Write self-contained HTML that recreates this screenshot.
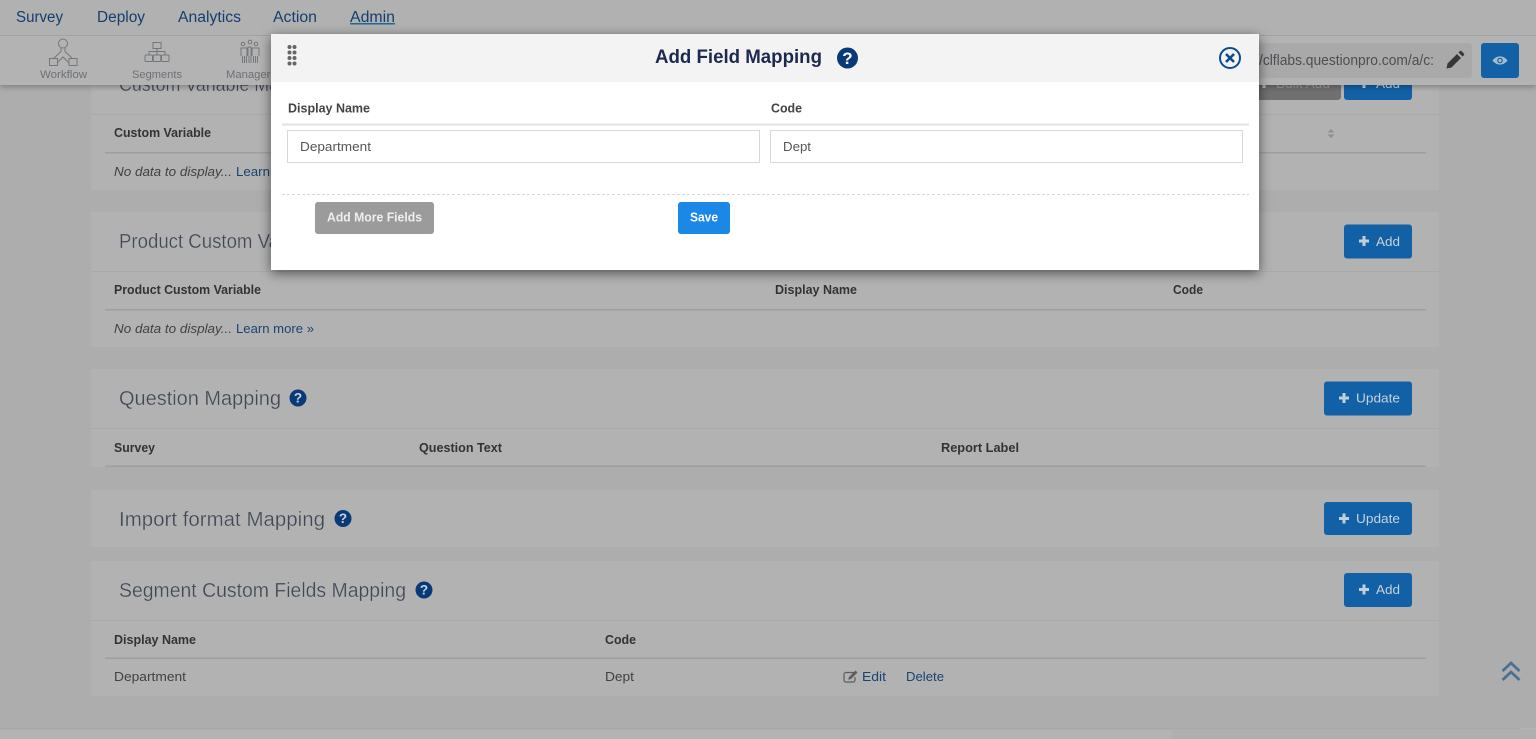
<!DOCTYPE html>
<html>
<head>
<meta charset="utf-8">
<title>Add Field Mapping</title>
<style>
html,body{margin:0;padding:0;width:1536px;height:739px;overflow:hidden;background:#adadad}
svg{display:block}
text{font-family:"Liberation Sans",sans-serif}
.nav{font-size:15.5px;fill:#123f6f}
.sub{font-size:11px;fill:#6c7076}
.h{font-size:20px;fill:#3f4856;stroke:#b2b2b2;stroke-width:.3px}
.th{font-size:12.5px;font-weight:bold;fill:#333}
.td{font-size:13px;fill:#414141}
.lnk{font-size:13px;fill:#1a4372}
.btn{font-size:13px;fill:#c6d2dd}
.mth{font-size:12.5px;font-weight:bold;fill:#444}
.inp{font-size:13px;fill:#555}
.q{font-size:13.5px;font-weight:bold;fill:#c9d3de}
</style>
</head>
<body>
<svg width="1536" height="739" viewBox="0 0 1536 739" xmlns="http://www.w3.org/2000/svg">
<defs>
<filter id="s1" x="-5%" y="-50%" width="110%" height="200%"><feDropShadow dx="0" dy="2" stdDeviation="3" flood-color="#000" flood-opacity=".28"/></filter>
<filter id="s2" x="-5%" y="-15%" width="110%" height="130%"><feDropShadow dx="0" dy="3" stdDeviation="6" flood-color="#000" flood-opacity=".55"/></filter>
<g id="help"><circle cx="0" cy="0" r="8.500" fill="#093a78"/><text x="0" y="4.700" text-anchor="middle" class="q">?</text></g>
<path id="plus" d="M-1.500-5h3v3.500h3.500v3h-3.500v3.500h-3v-3.500h-3.500v-3h3.500z" fill="#c2cfdb"/>
</defs>

<rect width="1536" height="739" fill="#adadad"/>

<!-- cards -->
<rect x="91" y="80" width="1348" height="110" fill="#b2b2b2"/>
<rect x="91" y="212" width="1348" height="135" fill="#b2b2b2"/>
<rect x="91" y="369" width="1348" height="98" fill="#b2b2b2"/>
<rect x="91" y="490" width="1348" height="57" fill="#b2b2b2"/>
<rect x="91" y="561" width="1348" height="135" fill="#b2b2b2"/>
<rect x="0" y="728" width="1536" height="11" fill="#b3b3b3"/>
<rect x="0" y="728" width="1520" height="1.500" fill="#a8a8a8"/>
<rect x="1172" y="729" width="364" height="10" fill="#afafaf"/>

<!-- card 1 -->
<text x="119" y="91" class="h" textLength="160" lengthAdjust="spacingAndGlyphs">Custom Variable Ma</text>
<rect x="1250" y="70" width="91" height="30" rx="3" fill="#707070"/>
<text x="1276" y="88" font-size="13" fill="#999" textLength="54" lengthAdjust="spacingAndGlyphs">Bulk Add</text>
<use href="#plus" x="1264" y="83"/>
<rect x="1344" y="70" width="68" height="30" rx="3" fill="#1260a5"/>
<use href="#plus" x="1364" y="83"/>
<text x="1376" y="88" class="btn" textLength="24" lengthAdjust="spacingAndGlyphs">Add</text>
<rect x="91" y="114" width="1348" height="1" fill="#a9a9a9"/>
<text x="114" y="137" class="th" textLength="97" lengthAdjust="spacingAndGlyphs">Custom Variable</text>
<path d="M1331 129l3.500 3.500h-7zM1331 138l3.500-3.500h-7z" fill="#8f8f8f"/>
<rect x="105" y="152" width="1321" height="1.500" fill="#9e9e9e"/>
<text x="114" y="176" class="td" font-style="italic" textLength="118" lengthAdjust="spacingAndGlyphs">No data to display...</text>
<text x="236" y="176" class="lnk" textLength="34" lengthAdjust="spacingAndGlyphs">Learn</text>

<!-- card 2 -->
<text x="119" y="248" class="h" textLength="160" lengthAdjust="spacingAndGlyphs">Product Custom Va</text>
<rect x="1344" y="224.500" width="68" height="34" rx="3" fill="#1260a5"/>
<use href="#plus" x="1364" y="241"/>
<text x="1376" y="246" class="btn" textLength="24" lengthAdjust="spacingAndGlyphs">Add</text>
<rect x="91" y="271" width="1348" height="1" fill="#a9a9a9"/>
<text x="114" y="294" class="th" textLength="147" lengthAdjust="spacingAndGlyphs">Product Custom Variable</text>
<text x="775" y="294" class="th" textLength="82" lengthAdjust="spacingAndGlyphs">Display Name</text>
<text x="1173" y="294" class="th" textLength="30" lengthAdjust="spacingAndGlyphs">Code</text>
<rect x="105" y="309" width="1321" height="1.500" fill="#9e9e9e"/>
<text x="114" y="333" class="td" font-style="italic" textLength="118" lengthAdjust="spacingAndGlyphs">No data to display...</text>
<text x="236" y="333" class="lnk" textLength="78" lengthAdjust="spacingAndGlyphs">Learn more »</text>

<!-- card 3 -->
<text x="119" y="405" class="h" textLength="162" lengthAdjust="spacingAndGlyphs">Question Mapping</text>
<use href="#help" x="298" y="398"/>
<rect x="1324" y="381.500" width="88" height="34" rx="3" fill="#1260a5"/>
<use href="#plus" x="1344" y="398"/>
<text x="1356" y="402.500" class="btn" textLength="44" lengthAdjust="spacingAndGlyphs">Update</text>
<rect x="91" y="428" width="1348" height="1" fill="#a9a9a9"/>
<text x="114" y="452" class="th" textLength="41" lengthAdjust="spacingAndGlyphs">Survey</text>
<text x="419" y="452" class="th" textLength="83" lengthAdjust="spacingAndGlyphs">Question Text</text>
<text x="941" y="452" class="th" textLength="78" lengthAdjust="spacingAndGlyphs">Report Label</text>
<rect x="105" y="465.500" width="1321" height="1.500" fill="#9e9e9e"/>

<!-- card 4 -->
<text x="119" y="526" class="h" textLength="206" lengthAdjust="spacingAndGlyphs">Import format Mapping</text>
<use href="#help" x="343" y="518.500"/>
<rect x="1324" y="502" width="88" height="33" rx="3" fill="#1260a5"/>
<use href="#plus" x="1344" y="518.500"/>
<text x="1356" y="523" class="btn" textLength="44" lengthAdjust="spacingAndGlyphs">Update</text>

<!-- card 5 -->
<text x="119" y="597" class="h" textLength="287" lengthAdjust="spacingAndGlyphs">Segment Custom Fields Mapping</text>
<use href="#help" x="424" y="590"/>
<rect x="1344" y="573" width="68" height="34" rx="3" fill="#1260a5"/>
<use href="#plus" x="1364" y="589.500"/>
<text x="1376" y="594" class="btn" textLength="24" lengthAdjust="spacingAndGlyphs">Add</text>
<rect x="91" y="620" width="1348" height="1" fill="#a9a9a9"/>
<text x="114" y="644" class="th" textLength="82" lengthAdjust="spacingAndGlyphs">Display Name</text>
<text x="605" y="644" class="th" textLength="31" lengthAdjust="spacingAndGlyphs">Code</text>
<rect x="105" y="657.500" width="1321" height="1.500" fill="#9e9e9e"/>
<text x="114" y="681" class="td" textLength="72" lengthAdjust="spacingAndGlyphs">Department</text>
<text x="605" y="681" class="td" textLength="29" lengthAdjust="spacingAndGlyphs">Dept</text>
<path d="M854 672.500h-8a2 2 0 0 0-2 2v5.500a2 2 0 0 0 2 2h7a2 2 0 0 0 2-2v-3" fill="none" stroke="#5c5c5c" stroke-width="1.200"/>
<path d="M849 677l-.8 2.800 2.800-.8 6.500-6.500-2-2z" fill="#5c5c5c"/>
<text x="862" y="681" class="lnk" textLength="24" lengthAdjust="spacingAndGlyphs">Edit</text>
<text x="906" y="681" class="lnk" textLength="38" lengthAdjust="spacingAndGlyphs">Delete</text>

<!-- scroll-top chevrons -->
<g fill="none" stroke="#4a7195" stroke-width="2.800"><path d="M1502.500 671l8.500-8 8.500 8"/><path d="M1502.500 680l8.500-8 8.500 8"/></g>

<!-- nav -->
<rect x="0" y="36" width="1536" height="49" fill="#b3b3b3" filter="url(#s1)"/>
<rect x="0" y="0" width="1536" height="35" fill="#b1b1b1"/>
<rect x="0" y="35" width="1536" height="1" fill="#a2a2a2"/>
<text x="16" y="22" class="nav" textLength="47" lengthAdjust="spacingAndGlyphs">Survey</text>
<text x="97" y="22" class="nav" textLength="48" lengthAdjust="spacingAndGlyphs">Deploy</text>
<text x="178" y="22" class="nav" textLength="63" lengthAdjust="spacingAndGlyphs">Analytics</text>
<text x="273" y="22" class="nav" textLength="44" lengthAdjust="spacingAndGlyphs">Action</text>
<text x="350" y="22" class="nav" textLength="45" lengthAdjust="spacingAndGlyphs">Admin</text>
<rect x="350" y="23" width="45" height="1.500" fill="#1c6a96"/>

<!-- sub-nav icons -->
<g fill="none" stroke="#74777b" stroke-width="1">
  <circle cx="63" cy="43.500" r="4.500"/>
  <path d="M61 48v3.500l-7 6.500M65 48v3.500l7 6.500M57 63l6-6 6 6"/>
  <rect x="49.500" y="58.500" width="8" height="7"/><rect x="69" y="58.500" width="8" height="7"/>
  <rect x="153" y="42.500" width="8" height="6"/>
  <path d="M157 48.500v3M149 55v-3.500h16V55M157 51.500V55"/>
  <rect x="145" y="55" width="7.500" height="6.500" rx="1"/><rect x="153.300" y="55" width="7.500" height="6.500" rx="1"/><rect x="161.500" y="55" width="7.500" height="6.500" rx="1"/>
  <circle cx="243" cy="44" r="1.800"/><circle cx="250" cy="42" r="1.800"/><circle cx="256" cy="44" r="1.800"/>
  <path d="M241 56v-8h6v8M252 56v-8h7v8M248 56v-9h3v9"/>
  <path d="M242.500 56v7M244.500 56v7M246.500 56v7M249 56v7M251 56v7M253.500 56v7M255.500 56v7M257.500 56v7"/>
</g>
<text x="40" y="78" class="sub" textLength="47" lengthAdjust="spacingAndGlyphs">Workflow</text>
<text x="132" y="78" class="sub" textLength="50" lengthAdjust="spacingAndGlyphs">Segments</text>
<text x="226" y="78" class="sub" textLength="50" lengthAdjust="spacingAndGlyphs">Managers</text>

<!-- URL field -->
<rect x="1250" y="43" width="222" height="35" rx="3" fill="#a9a9a9"/>
<text x="1259" y="65" font-size="14.500" fill="#4c4f53" textLength="175" lengthAdjust="spacingAndGlyphs">/clflabs.questionpro.com/a/c:</text>
<path d="M1446.500 68.500l1-5 9.500-9.500 4 4-9.500 9.500zM1458.500 52.500l1.500-1.500a1 1 0 0 1 1.400 0l2.600 2.600a1 1 0 0 1 0 1.400l-1.500 1.500z" fill="#33373c"/>
<rect x="1481" y="43" width="38" height="35" rx="3" fill="#1260a5"/>
<path d="M1492.500 60.500c4-5.500 11-5.500 15 0c-4 5.500-11 5.500-15 0z" fill="#a9bccd"/>
<circle cx="1500" cy="60.500" r="2.800" fill="#1260a5"/><circle cx="1500" cy="60.500" r="1.600" fill="#a9bccd"/>

<!-- modal -->
<rect x="271" y="34" width="988" height="236" fill="#fff" filter="url(#s2)"/>
<rect x="271" y="34" width="988" height="48" fill="#f3f3f3"/>
<g fill="#666">
  <circle cx="289.500" cy="47" r="2"/><circle cx="294.500" cy="47" r="2"/>
  <circle cx="289.500" cy="52.500" r="2"/><circle cx="294.500" cy="52.500" r="2"/>
  <circle cx="289.500" cy="58" r="2"/><circle cx="294.500" cy="58" r="2"/>
  <circle cx="289.500" cy="63.500" r="2"/><circle cx="294.500" cy="63.500" r="2"/>
</g>
<text x="655" y="63" font-size="19.500" font-weight="bold" fill="#1c2a50" textLength="167" lengthAdjust="spacingAndGlyphs">Add Field Mapping</text>
<circle cx="847.500" cy="58" r="10.500" fill="#093a78"/>
<text x="847.500" y="64" text-anchor="middle" font-size="17" font-weight="bold" fill="#fff">?</text>
<circle cx="1230" cy="58" r="10" fill="none" stroke="#0c4a92" stroke-width="2"/>
<path d="M1226 54l8 8M1234 54l-8 8" stroke="#0c4a92" stroke-width="2.600" fill="none"/>

<text x="288" y="112.500" class="mth" textLength="82" lengthAdjust="spacingAndGlyphs">Display Name</text>
<text x="771" y="112.500" class="mth" textLength="31" lengthAdjust="spacingAndGlyphs">Code</text>
<rect x="282" y="123.500" width="967" height="2" fill="#e2e2e2"/>
<rect x="287.500" y="130.500" width="472" height="32" fill="#fff" stroke="#d9d9d9"/>
<rect x="770.500" y="130.500" width="472" height="32" fill="#fff" stroke="#d9d9d9"/>
<text x="300" y="151" class="inp" textLength="71" lengthAdjust="spacingAndGlyphs">Department</text>
<text x="783" y="151" class="inp" textLength="28" lengthAdjust="spacingAndGlyphs">Dept</text>
<path d="M282 194.500H1249" stroke="#d8d8d8" stroke-dasharray="3 2" fill="none"/>
<rect x="315" y="202" width="119" height="32" rx="3" fill="#9b9b9b"/>
<text x="327" y="221.500" font-size="13" font-weight="bold" fill="#eee" textLength="95" lengthAdjust="spacingAndGlyphs">Add More Fields</text>
<rect x="678" y="202" width="52" height="32" rx="3" fill="#1b87e6"/>
<text x="690" y="221.500" font-size="13" font-weight="bold" fill="#fff" textLength="28" lengthAdjust="spacingAndGlyphs">Save</text>
</svg>
</body>
</html>
